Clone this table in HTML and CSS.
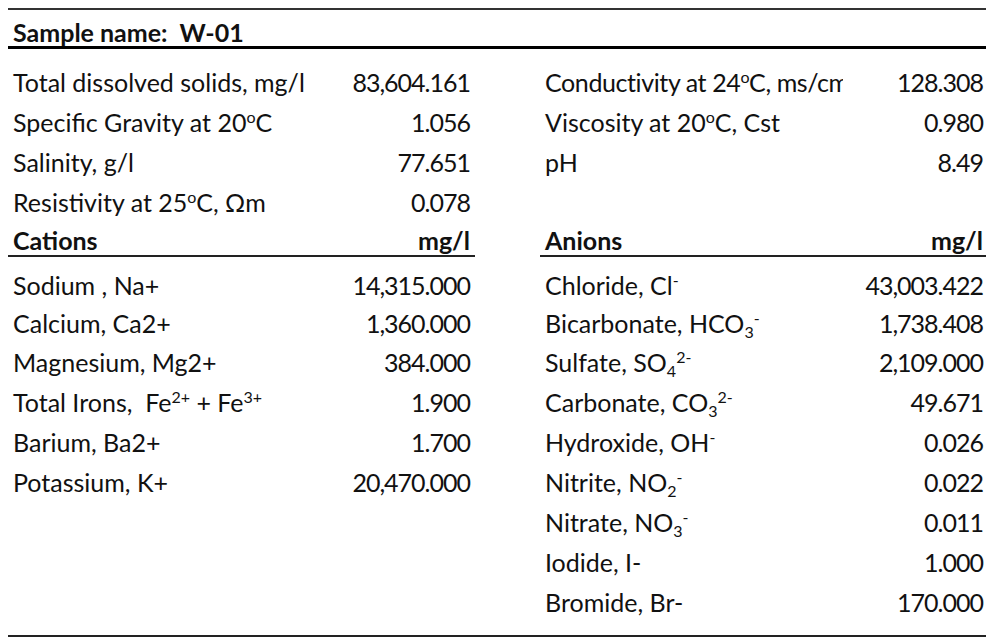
FILE: index.html
```html
<!DOCTYPE html>
<html lang="en">
<head>
    <meta charset="UTF-8">
    <title>Water analysis W-01</title>
    <link rel="stylesheet" href="styles.css">
</head>
<body>

<div class="sheet">
    <div class="title">Sample name:&nbsp; W-01</div>

    <div class="props">
        <div class="row">
            <div class="label">Total dissolved solids, mg/l</div>
            <div class="num">83,604.161</div>
            <div></div>
            <div class="label clip">Conductivity at 24<sup>o</sup>C, ms/cm</div>
            <div class="num">128.308</div>
        </div>
        <div class="row">
            <div class="label">Specific Gravity at 20<sup>o</sup>C</div>
            <div class="num">1.056</div>
            <div></div>
            <div class="label">Viscosity at 20<sup>o</sup>C, Cst</div>
            <div class="num">0.980</div>
        </div>
        <div class="row">
            <div class="label">Salinity, g/l</div>
            <div class="num">77.651</div>
            <div></div>
            <div class="label">pH</div>
            <div class="num">8.49</div>
        </div>
        <div class="row">
            <div class="label">Resistivity at 25<sup>o</sup>C, &Omega;m</div>
            <div class="num">0.078</div>
            <div></div>
            <div></div>
            <div></div>
        </div>
        <div class="row head">
            <div class="label">Cations</div>
            <div class="num">mg/l</div>
            <div class="blank"></div>
            <div class="label">Anions</div>
            <div class="num">mg/l</div>
        </div>
    </div>

    <div class="ions">
        <div class="row h39">
            <div class="label">Sodium , Na+</div>
            <div class="num">14,315.000</div>
            <div></div>
            <div class="label">Chloride, Cl<sup>-</sup></div>
            <div class="num">43,003.422</div>
        </div>
        <div class="row h38">
            <div class="label">Calcium, Ca2+</div>
            <div class="num">1,360.000</div>
            <div></div>
            <div class="label">Bicarbonate, HCO<sub>3</sub><sup>-</sup></div>
            <div class="num">1,738.408</div>
        </div>
        <div class="row h39">
            <div class="label">Magnesium, Mg2+</div>
            <div class="num">384.000</div>
            <div></div>
            <div class="label">Sulfate, SO<sub>4</sub><sup>2-</sup></div>
            <div class="num">2,109.000</div>
        </div>
        <div class="row h41">
            <div class="label">Total Irons,&nbsp; Fe<sup>2+</sup> + Fe<sup>3+</sup></div>
            <div class="num">1.900</div>
            <div></div>
            <div class="label">Carbonate, CO<sub>3</sub><sup>2-</sup></div>
            <div class="num">49.671</div>
        </div>
        <div class="row">
            <div class="label">Barium, Ba2+</div>
            <div class="num">1.700</div>
            <div></div>
            <div class="label">Hydroxide, OH<sup>-</sup></div>
            <div class="num">0.026</div>
        </div>
        <div class="row">
            <div class="label">Potassium, K+</div>
            <div class="num">20,470.000</div>
            <div></div>
            <div class="label">Nitrite, NO<sub>2</sub><sup>-</sup></div>
            <div class="num">0.022</div>
        </div>
        <div class="row">
            <div></div>
            <div></div>
            <div></div>
            <div class="label">Nitrate, NO<sub>3</sub><sup>-</sup></div>
            <div class="num">0.011</div>
        </div>
        <div class="row">
            <div></div>
            <div></div>
            <div></div>
            <div class="label">Iodide, I-</div>
            <div class="num">1.000</div>
        </div>
        <div class="row">
            <div></div>
            <div></div>
            <div></div>
            <div class="label">Bromide, Br-</div>
            <div class="num">170.000</div>
        </div>
    </div>
</div>

</body>
</html>
```

FILE: styles.css
```css
body {
    margin: 8px;
    background-color: #fff;
    font-family: Lato, "Open Sans", sans-serif;
    font-size: 25px;
    color: #111;
}

.sheet {
    width: 980px;
    border-top: 2px solid #333;
    border-bottom: 2px solid #222;
}

.title {
    height: 39px;
    padding-top: 7px;
    box-sizing: border-box;
    line-height: 30px;
    padding-left: 5px;
    font-weight: bold;
    border-bottom: 3px solid #000;
}

.props {
    padding-top: 13px;
}

.ions {
    padding-top: 8px;
    padding-bottom: 13px;
}

.row {
    display: grid;
    grid-template-columns: 320px 147px 65px 303px 145px;
    align-items: center;
    height: 40px;
    line-height: 30px;
}

.row > div {
    white-space: nowrap;
}

.row.h38 { height: 38px; }
.row.h39 { height: 39px; }
.row.h41 { height: 41px; }

.label {
    padding-left: 5px;
}

.clip {
    overflow: hidden;
    letter-spacing: -0.4px;
}

.num {
    text-align: right;
    padding-right: 5px;
    letter-spacing: -1px;
}

.row.head {
    height: 35px;
    align-items: stretch;
    font-weight: bold;
}

.row.head > div {
    padding-top: 3px;
    line-height: 30px;
    border-bottom: 2px solid #222;
}

.row.head > .num {
    letter-spacing: 0;
}

.row.head > .blank {
    border-bottom: none;
}

sup, sub {
    font-size: 16px;
    line-height: 0;
}

sup {
    vertical-align: 9px;
}

sub {
    vertical-align: -5px;
}
```
